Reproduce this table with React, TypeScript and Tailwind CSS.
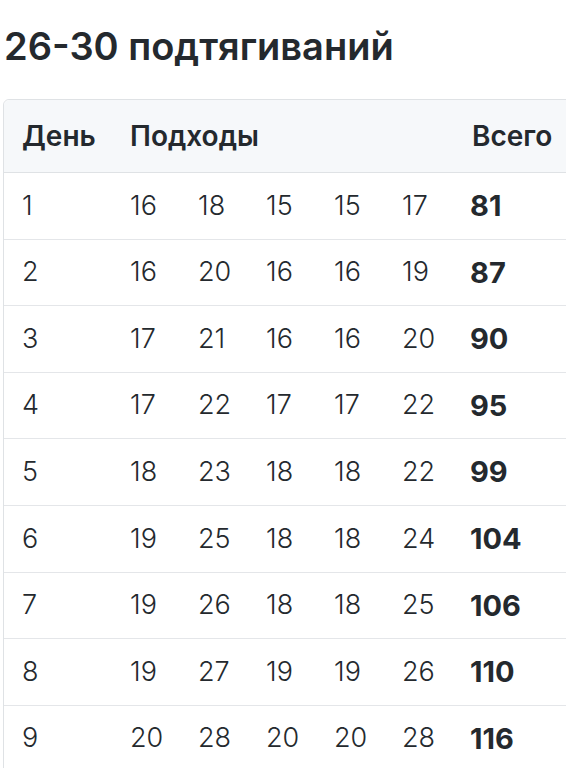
const rows = [
  { day: 1, sets: [16, 18, 15, 15, 17], total: 81 },
  { day: 2, sets: [16, 20, 16, 16, 19], total: 87 },
  { day: 3, sets: [17, 21, 16, 16, 20], total: 90 },
  { day: 4, sets: [17, 22, 17, 17, 22], total: 95 },
  { day: 5, sets: [18, 23, 18, 18, 22], total: 99 },
  { day: 6, sets: [19, 25, 18, 18, 24], total: 104 },
  { day: 7, sets: [19, 26, 18, 18, 25], total: 106 },
  { day: 8, sets: [19, 27, 19, 19, 26], total: 110 },
  { day: 9, sets: [20, 28, 20, 20, 28], total: 116 },
];

const cols = 'grid grid-cols-[126px_68px_68px_68px_68px_68px_1fr]';

export default function App() {
  return (
    <div className="w-[566px] h-[768px] overflow-hidden bg-white text-[#24292e] font-['Inter','Liberation_Sans',sans-serif]">
      <h1 className="pl-[4px] pt-[24px] text-[38px] leading-[44px] font-semibold">
        26-30 подтягиваний
      </h1>

      <div className="ml-[3px] mt-[31px] w-[600px] border border-[#dfe2e5] rounded-tl-[6px]">
        <div className={`${cols} h-[73px] items-center bg-[#f6f8fa] border-b border-[#dfe2e5] text-[28px] font-semibold rounded-tl-[6px]`}>
          <div className="pl-[18px]">День</div>
          <div className="col-span-5">Подходы</div>
          <div className="pl-[2px]">Всего</div>
        </div>
        {rows.map((r) => (
          <div
            key={r.day}
            className={`${cols} h-[66.6px] items-center border-b border-[#e4e6e9] text-[27px] font-light`}
          >
            <div className="pl-[18px]">{r.day}</div>
            {r.sets.map((s, i) => (
              <div key={i}>{s}</div>
            ))}
            <div className="font-bold text-[29px]">{r.total}</div>
          </div>
        ))}
      </div>
    </div>
  );
}
